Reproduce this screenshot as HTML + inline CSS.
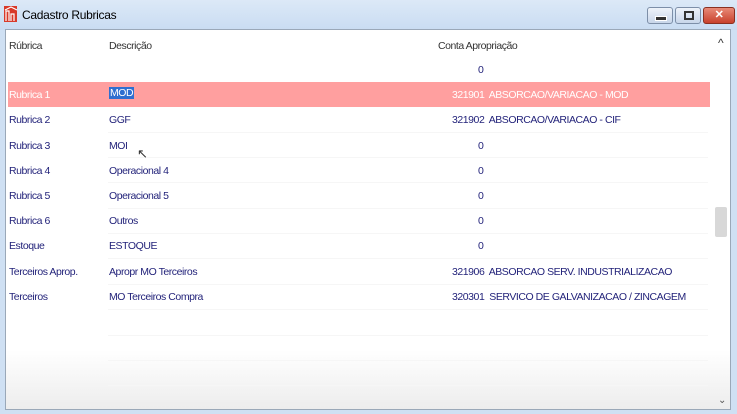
<!DOCTYPE html>
<html><head><style>
body{margin:0;width:737px;height:414px;overflow:hidden;background:#cfe0f3;font-family:"Liberation Sans",sans-serif;font-size:10.5px;letter-spacing:-0.45px;position:relative}
.title{position:absolute;left:0;top:0;width:737px;height:30px;background:linear-gradient(#dce9f7,#c9dcf2)}
.tt{position:absolute;left:22px;top:8px;font-size:12px;color:#000;letter-spacing:-0.3px}
.btn{position:absolute;top:7px;height:15px;border:1px solid #7d8fa8;border-radius:3px;background:linear-gradient(#eef3fa,#c8d6ea)}
.content{position:absolute;left:5px;top:29px;width:726px;height:381px;background:linear-gradient(#fff 0,#fff 320px,#ececec 381px);border:1px solid #9aa8b8;box-sizing:border-box}
.t{position:absolute;white-space:nowrap}
.b{color:#23237a}
.sep{position:absolute;left:108px;width:600px;height:1px;background:#f6f6f6}
</style></head><body>
<div class="title">
<svg style="position:absolute;left:4px;top:6px" width="13" height="16"><rect width="13" height="16" fill="#d83a2a"/><path d="M2 15V5h3v10M7 15V8h3v7M1 4L7 1l6 3" stroke="#fff" stroke-width="1.2" fill="none"/></svg>
<div class="tt">Cadastro Rubricas</div>
<div class="btn" style="left:647px;width:24px"><div style="position:absolute;left:7px;top:8px;width:10px;height:3px;background:#333;border:1px solid #fff"></div></div>
<div class="btn" style="left:675px;width:24px"><div style="position:absolute;left:8px;top:3px;width:6px;height:5px;border:2px solid #333"></div></div>
<div class="btn" style="left:703px;width:30px;background:linear-gradient(#e88a78,#c8412c);border-color:#8a3020;color:#fff;font-weight:bold;text-align:center;font-size:11px;line-height:15px">✕</div>
</div>
<div class="content"></div>
<div style="position:absolute;left:8px;top:82px;width:702px;height:25px;background:#ff9f9f"></div>
<div class="t" style="left:109px;top:87px;background:#2f6fd0;color:#fff;padding:0 1px">MOD</div>
<div class="t" style="left:9px;top:40px;color:#333">Rúbrica</div>
<div class="t" style="left:109px;top:40px;color:#333">Descrição</div>
<div class="t" style="left:438px;top:40px;color:#333">Conta Apropriação</div>
<div class="t" style="left:718px;top:36px;font-size:12px;color:#333">^</div>
<div class="t" style="left:718px;top:395px;font-size:10px;color:#555">⌄</div>
<div style="position:absolute;left:715px;top:207px;width:12px;height:30px;background:#d8d8d8;border-radius:2px"></div>
<div class="t b" style="left:478px;top:64px">0</div>
<div class="sep" style="top:132px"></div><div class="sep" style="top:157px"></div><div class="sep" style="top:182px"></div><div class="sep" style="top:208px"></div><div class="sep" style="top:233px"></div><div class="sep" style="top:258px"></div><div class="sep" style="top:284px"></div><div class="sep" style="top:309px"></div><div class="sep" style="top:335px"></div><div class="sep" style="top:360px"></div><div class="sep" style="top:385px"></div>
<div class="t" style="left:9px;top:89px;color:#fff">Rubrica 1</div>
<div class="t" style="left:452px;top:89px;color:#fff">321901&nbsp; ABSORCAO/VARIACAO - MOD</div>
<div class="t b" style="left:9px;top:114px">Rubrica 2</div><div class="t b" style="left:109px;top:114px">GGF</div><div class="t b" style="left:452px;top:114px">321902&nbsp; ABSORCAO/VARIACAO - CIF</div>
<div class="t b" style="left:9px;top:140px">Rubrica 3</div><div class="t b" style="left:109px;top:140px">MOI</div><div class="t b" style="left:478px;top:140px">0</div>
<div class="t b" style="left:9px;top:165px">Rubrica 4</div><div class="t b" style="left:109px;top:165px">Operacional 4</div><div class="t b" style="left:478px;top:165px">0</div>
<div class="t b" style="left:9px;top:190px">Rubrica 5</div><div class="t b" style="left:109px;top:190px">Operacional 5</div><div class="t b" style="left:478px;top:190px">0</div>
<div class="t b" style="left:9px;top:215px">Rubrica 6</div><div class="t b" style="left:109px;top:215px">Outros</div><div class="t b" style="left:478px;top:215px">0</div>
<div class="t b" style="left:9px;top:240px">Estoque</div><div class="t b" style="left:109px;top:240px">ESTOQUE</div><div class="t b" style="left:478px;top:240px">0</div>
<div class="t b" style="left:9px;top:266px">Terceiros Aprop.</div><div class="t b" style="left:109px;top:266px">Apropr MO Terceiros</div><div class="t b" style="left:452px;top:266px">321906&nbsp; ABSORCAO SERV. INDUSTRIALIZACAO</div>
<div class="t b" style="left:9px;top:291px">Terceiros</div><div class="t b" style="left:109px;top:291px">MO Terceiros Compra</div><div class="t b" style="left:452px;top:291px">320301&nbsp; SERVICO DE GALVANIZACAO / ZINCAGEM</div>
<div class="t" style="left:137px;top:146px;font-size:13px;color:#333">↖</div>
</body></html>
